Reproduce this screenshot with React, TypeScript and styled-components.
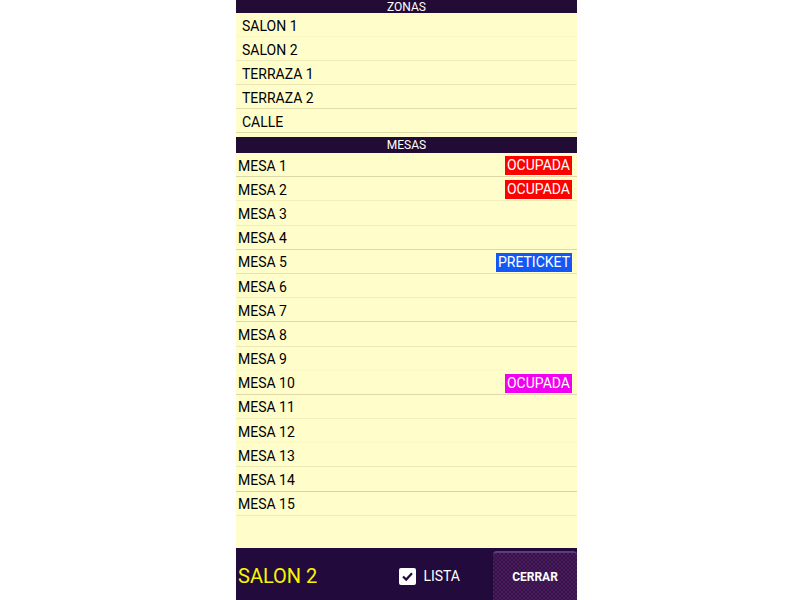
import React from 'react';
import styled, { createGlobalStyle } from 'styled-components';

const GlobalStyle = createGlobalStyle`
  html, body {
    margin: 0;
    padding: 0;
    background: #ffffff;
    font-family: Roboto, "Liberation Sans", sans-serif;
  }
`;

const Screen = styled.div`
  width: 341px;
  height: 600px;
  margin-left: 236px;
  display: flex;
  flex-direction: column;
  background: #fffdca;
  overflow: hidden;
`;

const SectionHeader = styled.div<{ $h: number }>`
  height: ${p => p.$h}px;
  line-height: ${p => p.$h + 1}px;
  background: #220b35;
  color: #ffffff;
  font-size: 12px;
  text-align: center;
  flex-shrink: 0;
`;

const ZoneList = styled.div`
  display: flex;
  flex-direction: column;
  margin-bottom: 4px;
`;

const ZoneRow = styled.div<{ $line: string }>`
  height: 23px;
  line-height: 27px;
  padding-left: 6px;
  font-size: 14px;
  color: #000;
  border-bottom: 1px solid ${p => p.$line};
  overflow: hidden;
`;

const MesaList = styled.div`
  flex: 1;
  display: flex;
  flex-direction: column;
`;

const MesaRow = styled.div<{ $line: string }>`
  height: 21.2px;
  padding: 2px 5px 0 2px;
  display: flex;
  align-items: center;
  justify-content: space-between;
  font-size: 14px;
  color: #000;
  border-bottom: 1px solid ${p => p.$line};
`;

const Badge = styled.span<{ $bg: string }>`
  background: ${p => p.$bg};
  color: #ffffff;
  font-size: 14px;
  line-height: 19px;
  padding: 0 2px;
`;

const BottomBar = styled.div`
  height: 52px;
  flex-shrink: 0;
  background: #230a3d;
  display: flex;
  align-items: flex-end;
`;

const ZoneName = styled.div`
  flex: 1;
  align-self: center;
  padding: 4px 0 0 2px;
  color: #f7f700;
  font-size: 20px;
`;

const ListToggle = styled.label`
  align-self: center;
  display: flex;
  align-items: center;
  gap: 7px;
  margin: 4px 33px 0 0;
  color: #ffffff;
  font-size: 14px;
`;

const CheckBox = styled.span`
  width: 17px;
  height: 17px;
  border-radius: 2px;
  background: #ffffff;
  display: flex;
  align-items: center;
  justify-content: center;
`;

const CloseButton = styled.button`
  width: 84px;
  height: 49px;
  border: none;
  border-top: 2px solid #5e3f76;
  border-radius: 4px 4px 0 0;
  background-color: #3a1450;
  background-image: repeating-conic-gradient(#4a1a5a 0 25%, #34124a 0 50%);
  background-size: 4px 4px;
  color: #ffffff;
  font-family: Roboto, "Liberation Sans", sans-serif;
  font-weight: bold;
  font-size: 12px;
  padding: 0;
`;

const zones = [
  { name: 'SALON 1', line: '#fbf8c6' },
  { name: 'SALON 2', line: '#efecbb' },
  { name: 'TERRAZA 1', line: '#e9e5b4' },
  { name: 'TERRAZA 2', line: '#e2dead' },
  { name: 'CALLE', line: '#dedaab' },
];

type Mesa = { name: string; status?: string; color?: string; line: string };

const mesas: Mesa[] = [
  { name: 'MESA 1', status: 'OCUPADA', color: '#ff0000', line: '#dcd8a8' },
  { name: 'MESA 2', status: 'OCUPADA', color: '#ff0000', line: '#f1eebc' },
  { name: 'MESA 3', line: '#f1eebc' },
  { name: 'MESA 4', line: '#dcd8a8' },
  { name: 'MESA 5', status: 'PRETICKET', color: '#1357f5', line: '#e6e2b2' },
  { name: 'MESA 6', line: '#f1eebc' },
  { name: 'MESA 7', line: '#dcd8a8' },
  { name: 'MESA 8', line: '#ebe7b7' },
  { name: 'MESA 9', line: '#fbf8c6' },
  { name: 'MESA 10', status: 'OCUPADA', color: '#f200f2', line: '#dcd8a8' },
  { name: 'MESA 11', line: '#f1eebc' },
  { name: 'MESA 12', line: '#fbf8c6' },
  { name: 'MESA 13', line: '#ebe7b7' },
  { name: 'MESA 14', line: '#d8d4a4' },
  { name: 'MESA 15', line: '#efecbb' },
];

const App: React.FC = () => {
  return (
    <>
      <GlobalStyle />
      <Screen>
        <SectionHeader $h={13}>ZONAS</SectionHeader>
        <ZoneList>
          {zones.map(z => (
            <ZoneRow key={z.name} $line={z.line}>{z.name}</ZoneRow>
          ))}
        </ZoneList>
        <SectionHeader $h={16}>MESAS</SectionHeader>
        <MesaList>
          {mesas.map(m => (
            <MesaRow key={m.name} $line={m.line}>
              <span>{m.name}</span>
              {m.status && <Badge $bg={m.color || '#f00'}>{m.status}</Badge>}
            </MesaRow>
          ))}
        </MesaList>
        <BottomBar>
          <ZoneName>SALON 2</ZoneName>
          <ListToggle>
            <CheckBox>
              <svg width="13" height="13" viewBox="0 0 13 13">
                <polyline points="2,6.5 5.2,9.6 11,3.2" fill="none" stroke="#230a3d" strokeWidth="2.2" />
              </svg>
            </CheckBox>
            LISTA
          </ListToggle>
          <CloseButton>CERRAR</CloseButton>
        </BottomBar>
      </Screen>
    </>
  );
};

export default App;
